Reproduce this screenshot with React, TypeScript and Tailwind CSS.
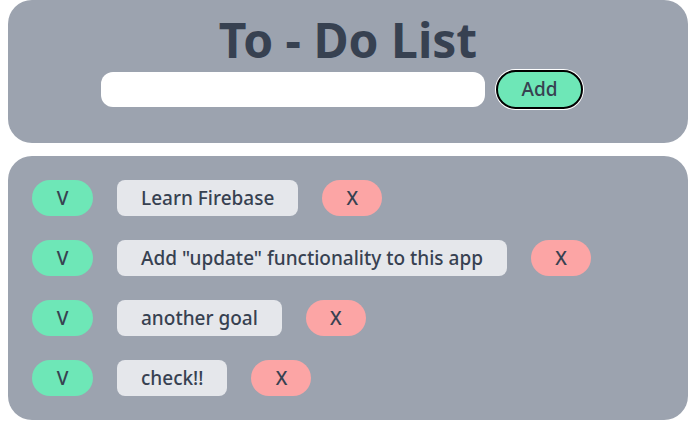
const todos = [
  "Learn Firebase",
  'Add "update" functionality to this app',
  "another goal",
  "check!!",
];

export default function App() {
  return (
    <div className="w-[696px] h-[436px] bg-white px-2 font-['Noto_Sans',sans-serif] text-[#374151]">
      {/* Header */}
      <div className="bg-[#9ca3af] rounded-3xl h-[143px] flex flex-col items-center pt-[14px]">
        <h1 className="text-5xl font-bold leading-[52px]">To - Do List</h1>
        <div className="flex items-center gap-[11px] mt-[4px] mr-3">
          <input
            className="w-[384px] h-[35px] rounded-xl bg-white outline-none px-3"
            type="text"
          />
          <button className="h-[39px] w-[87px] rounded-full bg-[#6ee7b7] border-2 border-black ring-1 ring-white text-[19px] font-medium">
            Add
          </button>
        </div>
      </div>

      {/* List */}
      <div className="bg-[#9ca3af] rounded-3xl mt-[13px] p-6 flex flex-col gap-6">
        {todos.map((t, i) => (
          <div key={i} className="flex items-center gap-6">
            <button className="h-9 w-[61px] rounded-full bg-[#6ee7b7] text-[19px] font-medium">V</button>
            <div className="h-9 px-6 rounded-lg bg-[#e5e7eb] text-[19px] font-medium flex items-center">{t}</div>
            <button className="h-9 w-[60px] rounded-full bg-[#fca5a5] text-[19px] font-medium">X</button>
          </div>
        ))}
      </div>
    </div>
  );
}
